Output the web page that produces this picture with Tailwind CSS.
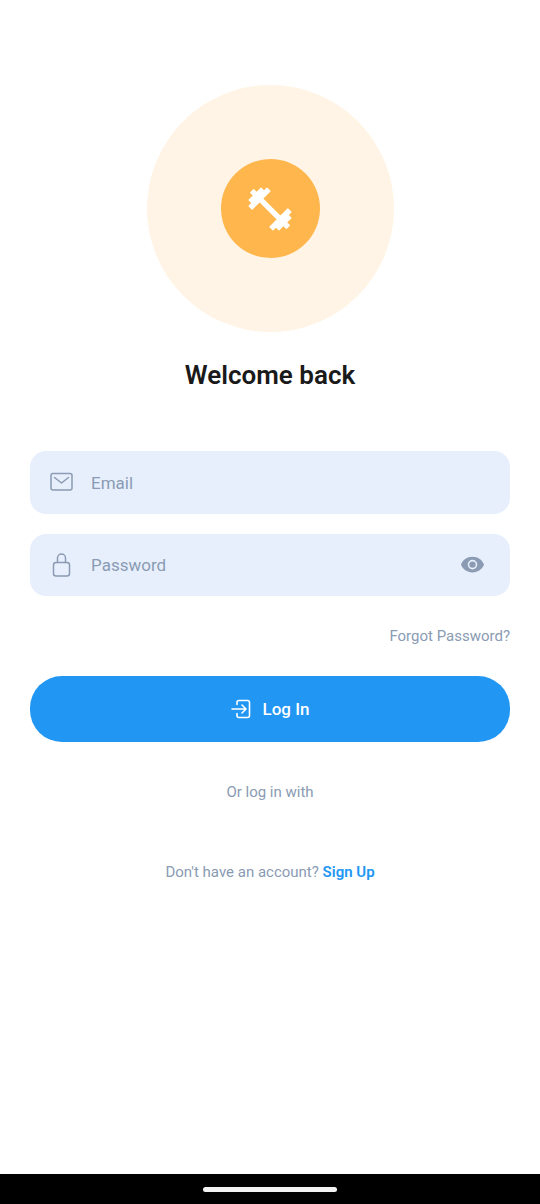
<!DOCTYPE html>
<html lang="en">
<head>
<meta charset="utf-8">
<meta name="viewport" content="width=device-width, initial-scale=1">
<title>Log In</title>
<script src="https://cdn.jsdelivr.net/npm/@tailwindcss/browser@4"></script>
</head>
<body class="flex min-h-screen flex-col bg-white font-['Roboto',sans-serif] text-[15px] leading-5 text-[#8a9bb3]">
<main class="flex flex-1 flex-col px-[30px] pt-[85px]">
  <div class="flex size-[247px] items-center justify-center self-center rounded-full bg-[#fff4e5]">
    <div class="flex size-[99px] items-center justify-center rounded-full bg-[#ffb74d]">
      <svg class="size-[50px]" viewBox="0 0 24 24" fill="#fff" stroke="#fff" stroke-width=".6" stroke-linejoin="round" aria-hidden="true">
        <path d="M20.570 14.860 22 13.430 20.570 12 17 15.570 8.430 7 12 3.430 10.570 2 9.140 3.430 7.710 2 5.570 4.140 4.140 2.710 2.710 4.140l1.430 1.430L2 7.710l1.430 1.430L2 10.570 3.430 12 7 8.430 15.570 17 12 20.570 13.430 22l1.430-1.430L16.290 22l2.140-2.140 1.430 1.430 1.430-1.430-1.430-1.430L22 16.290Z"/>
      </svg>
    </div>
  </div>
  <h1 class="mt-[27px] text-center text-[26px] leading-8 font-semibold text-[#1a1a1a]">Welcome back</h1>
  <form class="mt-[60px] flex flex-col">
    <label class="flex h-[63px] items-center rounded-2xl bg-[#e7effd] pl-5">
      <svg class="size-6 shrink-0" viewBox="0 0 24 24" fill="none" stroke="#8a9bb3" stroke-width="1.5" stroke-linecap="round" stroke-linejoin="round" aria-hidden="true"><rect x="1" y="2.500" width="21" height="16.500" rx="2"/><path d="M4.500 6.500l7 5.500 7-5.500"/></svg>
      <input type="email" aria-label="Email" placeholder="Email" class="ml-[17px] min-w-0 flex-1 text-[17px] leading-6 outline-none placeholder:text-[#8a9bb3] placeholder:opacity-100">
    </label>
    <div class="mt-5 flex h-[62px] items-center rounded-2xl bg-[#e7effd] pr-[26px] pl-5">
      <svg class="size-6 shrink-0" viewBox="0 0 24 24" fill="none" stroke="#8a9bb3" stroke-width="1.500" stroke-linecap="round" stroke-linejoin="round" aria-hidden="true"><rect x="3.500" y="9.500" width="16" height="13.500" rx="2.500"/><path d="M7.500 9.500V5a4 4 0 0 1 8 0v4.500"/></svg>
      <input type="password" aria-label="Password" placeholder="Password" class="ml-[17px] min-w-0 flex-1 text-[17px] leading-6 outline-none placeholder:text-[#8a9bb3] placeholder:opacity-100">
      <button type="button" aria-label="Show password"><svg class="size-6" viewBox="0 0 24 24" fill="#8a9bb3" aria-hidden="true"><path fill-rule="evenodd" d="M12.500 3.800C7 3.800 2.600 7 1 11.600c1.600 4.600 6 7.800 11.500 7.800s9.900-3.200 11.500-7.800C22.400 7 18 3.800 12.500 3.800Zm0 3a4.800 4.800 0 1 1 0 9.600 4.800 4.800 0 0 1 0-9.600Z"/><circle cx="12.500" cy="11.600" r="3.200"/></svg></button>
    </div>
    <a href="#" class="mt-[30px] self-end">Forgot Password?</a>
    <button type="submit" class="mt-[30px] flex h-[66px] items-center justify-center gap-3 rounded-[32px] bg-[#2196f3] text-[17px] leading-6 font-medium text-white">
      <svg class="size-5" viewBox="0 0 20 20" fill="none" stroke="#fff" stroke-width="1.600" stroke-linecap="round" stroke-linejoin="round" aria-hidden="true"><path d="M6 5.500V3.500a2 2 0 0 1 2-2h8.500a2 2 0 0 1 2 2v13a2 2 0 0 1-2 2H8a2 2 0 0 1-2-2v-2M1 10h13.500M11 6l4 4-4 4"/></svg>
      Log In
    </button>
  </form>
  <p class="mt-10 text-center">Or log in with</p>
  <p class="mt-[60px] text-center">Don't have an account? <a href="#" class="font-semibold text-[#2196f3]">Sign Up</a></p>
</main>
<footer class="flex h-[30px] items-center justify-center bg-black"><div class="h-[5px] w-[134px] rounded-full bg-[#f2f2f2]"></div></footer>
</body>
</html>
